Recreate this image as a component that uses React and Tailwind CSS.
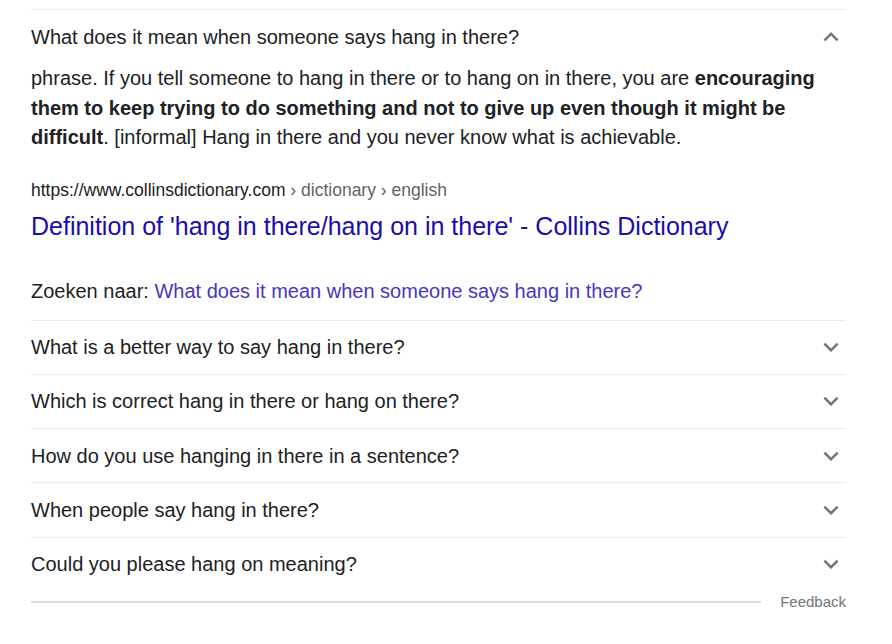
import React from "react";

function Chevron({ up }) {
  return (
    <svg width="30" height="30" viewBox="0 0 24 24" className="shrink-0">
      <path
        d={up ? "M7.41 15.41 12 10.83l4.59 4.58L18 14l-6-6-6 6z" : "M7.41 8.59 12 13.17l4.59-4.58L18 10l-6 6-6-6z"}
        fill="#70757a"
      />
    </svg>
  );
}

const questions = [
  "What is a better way to say hang in there?",
  "Which is correct hang in there or hang on there?",
  "How do you use hanging in there in a sentence?",
  "When people say hang in there?",
  "Could you please hang on meaning?",
];

export default function App() {
  return (
    <div
      className="w-[892px] h-[644px] bg-white text-[#202124]"
      style={{ fontFamily: '"Liberation Sans", Arial, sans-serif' }}
    >
      <div className="ml-[31px] w-[815px] pt-[9px]">
        <div className="border-t border-[#ebebeb]">
          <div className="flex h-[54px] items-center justify-between">
            <span className="text-[20px] leading-[24px]">What does it mean when someone says hang in there?</span>
            <Chevron up />
          </div>
          <p className="text-[20px] leading-[29.5px]">
            phrase. If you tell someone to hang in there or to hang on in there, you are{" "}
            <b>encouraging them to keep trying to do something and not to give up even though it might be difficult</b>.
            [informal] Hang in there and you never know what is achievable.
          </p>
          <div className="mt-[26px] text-[17.5px] leading-[22px]">
            <span className="text-[#202124]">https://www.collinsdictionary.com</span>
            <span className="text-[#5f6368]"> › dictionary › english</span>
          </div>
          <div className="mt-[10px] text-[25px] leading-[30px] text-[#1a0dab]">
            Definition of 'hang in there/hang on in there' - Collins Dictionary
          </div>
          <div className="mt-[38px] text-[20px] leading-[24px]">
            Zoeken naar: <span className="text-[#4636c2]">What does it mean when someone says hang in there?</span>
          </div>
        </div>
        <div className="mt-[17px]">
          {questions.map((q) => (
            <div key={q} className="flex h-[54.3px] items-center justify-between border-t border-[#ebebeb]">
              <span className="text-[20px] leading-[24px]">{q}</span>
              <Chevron />
            </div>
          ))}
        </div>
        <div className="mt-[1px] flex items-center">
          <div className="h-[2px] flex-1 bg-[#dadce0]" />
          <span className="ml-[19px] text-[15px] leading-[20px] text-[#70757a]">Feedback</span>
        </div>
      </div>
    </div>
  );
}
